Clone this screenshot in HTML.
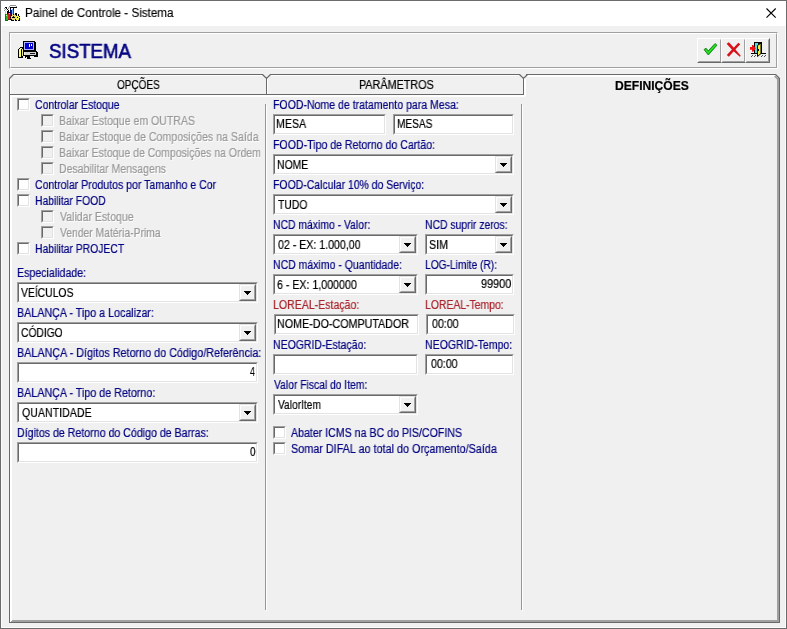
<!DOCTYPE html>
<html><head><meta charset="utf-8"><title>Painel de Controle - Sistema</title>
<style>
html,body{margin:0;padding:0}
body{width:787px;height:629px;overflow:hidden;background:#f0f0f0;position:relative;font-family:"Liberation Sans",sans-serif}
.a{position:absolute}
.t{will-change:transform;position:absolute;white-space:pre;transform-origin:0 0;font-family:"Liberation Sans",sans-serif}
.n{color:#000080;-webkit-text-stroke:0.2px #000080}.k{color:#000;-webkit-text-stroke:0.2px #000}.r{color:#a8242c;-webkit-text-stroke:0.2px #a8242c}
.d{color:#989898;-webkit-text-stroke:0.2px #989898;text-shadow:1px 1px 0 #fff}
.ti{color:#000;-webkit-text-stroke:0.15px #000}
.sis{-webkit-text-stroke:0.6px #000080}
.ed{position:absolute;box-sizing:border-box;background:#fff;border:1px solid;border-color:#a0a0a0 #fff #fff #a0a0a0}
.ed:before{content:"";position:absolute;left:0;top:0;right:0;bottom:0;border:1px solid;border-color:#696969 #e3e3e3 #e3e3e3 #696969}
.cb{position:absolute;box-sizing:border-box;width:13px;height:13px;background:#fff;border:1px solid;border-color:#a0a0a0 #fff #fff #a0a0a0}
.cb:before{content:"";position:absolute;left:0;top:0;right:0;bottom:0;border:1px solid;border-color:#696969 #e3e3e3 #e3e3e3 #696969}
.cb.dis{background:#f0f0f0}
.dd{position:absolute;box-sizing:border-box;width:17px;height:17px;background:#f0f0f0;border:1px solid;border-color:#e3e3e3 #696969 #696969 #e3e3e3}
.dd:before{content:"";position:absolute;left:0;top:0;right:0;bottom:0;border:1px solid;border-color:#fff #a0a0a0 #a0a0a0 #fff}
.dd i{position:absolute;left:4px;top:6px;width:7px;height:1px;background:#000}
.dd i:before{content:"";position:absolute;left:1px;top:1px;width:5px;height:1px;background:#000}
.dd i:after{content:"";position:absolute;left:3px;top:3px;width:1px;height:1px;background:#000;box-shadow:-1px -1px 0 #000,0 -1px 0 #000,1px -1px 0 #000}
.btn{position:absolute;box-sizing:border-box;background:#f0f0f0;border:1px solid;border-color:#fff #696969 #696969 #fff}
.btn:before{content:"";position:absolute;left:0;top:0;right:0;bottom:0;border:1px solid;border-color:#f0f0f0 #a0a0a0 #a0a0a0 #f0f0f0}
</style></head><body>

<div class="a" style="left:0;top:0;width:787px;height:629px;box-sizing:border-box;border:1px solid #6b6b6b"></div>
<div class="a" style="left:1px;top:1px;width:785px;height:25px;background:#fff"></div>
<div class="a" style="left:9px;top:32px;width:769px;height:37px;box-sizing:border-box;border:1px solid;border-color:#a0a0a0 #fff #fff #a0a0a0"></div>
<div class="a" style="left:10px;top:33px;width:767px;height:35px;box-sizing:border-box;border:1px solid;border-color:#fff #a0a0a0 #a0a0a0 #fff"></div>
<svg class="a" style="left:0;top:0" width="787" height="629" viewBox="0 0 787 629">
<g shape-rendering="crispEdges" fill="none" stroke-width="1">
<!-- window inner light line -->
<path d="M1.5 26 V628 M785.5 26 V628 M1 627.5 H786" stroke="#fbfbfb"/>
<!-- white highlights -->
<path d="M10.5 78 V95 M13 75.5 H262 M267.5 79 V94 M271 75.5 H519" stroke="#fff"/>
<path d="M527 75.5 H776 M527 76.5 H775 M524.5 78 V96 M525.5 79 V96" stroke="#fff"/>
<path d="M10 95.5 H526 M10 96.5 H525 M10.5 95 V622 M11.5 95 V621" stroke="#fff"/>
<!-- shadow -->
<path d="M777.5 79 V622 M778.5 78 V622 M12 620.5 H779 M11 621.5 H779" stroke="#a0a0a0"/>
<!-- dark -->
<path d="M9.5 78 V623 M9 622.5 H780 M779.5 78 V623 M13 74.5 H263 M270 74.5 H520 M526 74.5 H776 M266.5 78 V95 M523.5 78 V95 M9 94.5 H524" stroke="#696969"/>
<!-- separators -->
<path d="M265.5 104 V610 M521.5 104 V610" stroke="#969696"/>
<path d="M266.5 105 V611 M522.5 105 V611" stroke="#fff"/>
</g>
<g fill="none" stroke="#696969" stroke-width="1.2">
<path d="M9.5 78.5 L13.5 74.5 M262.5 74.5 L266.5 78.5 L270.5 74.5 M519.5 74.5 L523.5 78.5 L527.5 74.5 M775.5 74.5 L779.5 78.5"/>
</g>
<path d="M774.6 76 L778 79.4" stroke="#a0a0a0" stroke-width="1.6" fill="none"/>

</svg>
<div class="cb" style="left:17px;top:98px"></div>
<div class="cb dis" style="left:41px;top:114px"></div>
<div class="cb dis" style="left:41px;top:130px"></div>
<div class="cb dis" style="left:41px;top:146px"></div>
<div class="cb dis" style="left:41px;top:162px"></div>
<div class="cb" style="left:17px;top:178px"></div>
<div class="cb" style="left:17px;top:194px"></div>
<div class="cb dis" style="left:41px;top:210px"></div>
<div class="cb dis" style="left:41px;top:226px"></div>
<div class="cb" style="left:17px;top:242px"></div>
<div class="ed" style="left:17px;top:282px;width:241px;height:21px"></div>
<div class="dd" style="left:239px;top:284px"><i></i></div>
<div class="ed" style="left:17px;top:322px;width:241px;height:21px"></div>
<div class="dd" style="left:239px;top:324px"><i></i></div>
<div class="ed" style="left:17px;top:362px;width:241px;height:21px"></div>
<div class="ed" style="left:17px;top:402px;width:241px;height:21px"></div>
<div class="dd" style="left:239px;top:404px"><i></i></div>
<div class="ed" style="left:17px;top:442px;width:241px;height:21px"></div>
<div class="ed" style="left:273px;top:114px;width:113px;height:21px"></div>
<div class="ed" style="left:393px;top:114px;width:121px;height:21px"></div>
<div class="ed" style="left:273px;top:154px;width:241px;height:21px"></div>
<div class="dd" style="left:495px;top:156px"><i></i></div>
<div class="ed" style="left:273px;top:194px;width:241px;height:21px"></div>
<div class="dd" style="left:495px;top:196px"><i></i></div>
<div class="ed" style="left:273px;top:234px;width:145px;height:21px"></div>
<div class="dd" style="left:399px;top:236px"><i></i></div>
<div class="ed" style="left:425px;top:234px;width:89px;height:21px"></div>
<div class="dd" style="left:495px;top:236px"><i></i></div>
<div class="ed" style="left:273px;top:274px;width:145px;height:21px"></div>
<div class="dd" style="left:399px;top:276px"><i></i></div>
<div class="ed" style="left:425px;top:274px;width:89px;height:21px"></div>
<div class="ed" style="left:274px;top:314px;width:145px;height:21px"></div>
<div class="ed" style="left:426px;top:314px;width:89px;height:21px"></div>
<div class="ed" style="left:273px;top:354px;width:145px;height:21px"></div>
<div class="ed" style="left:425px;top:354px;width:89px;height:21px"></div>
<div class="ed" style="left:273px;top:394px;width:145px;height:21px"></div>
<div class="dd" style="left:399px;top:396px"><i></i></div>
<div class="cb" style="left:273px;top:426px"></div>
<div class="cb" style="left:273px;top:442px"></div>
<div class="btn" style="left:697px;top:38px;width:25px;height:25px"></div>
<div class="btn" style="left:721px;top:38px;width:25px;height:25px"></div>
<div class="btn" style="left:745px;top:38px;width:25px;height:25px"></div>
<svg class="a" style="left:0;top:0" width="787" height="629" viewBox="0 0 787 629">
<!-- close X -->
<path d="M766.5 8.5 L775.7 17.7 M775.7 8.5 L766.5 17.7" stroke="#000" stroke-width="1.1" fill="none"/>
<!-- title icon (tools) -->
<g shape-rendering="crispEdges">
<rect x="10" y="5" width="6" height="1" fill="#909090"/><rect x="9" y="6" width="1" height="1" fill="#909090"/><rect x="10" y="6" width="6" height="1" fill="#fff"/><rect x="16" y="6" width="1" height="1" fill="#909090"/><rect x="5" y="7" width="2" height="1" fill="#000"/><rect x="8" y="7" width="2" height="1" fill="#c8c8c8"/><rect x="10" y="7" width="7" height="1" fill="#000"/><rect x="4" y="8" width="1" height="1" fill="#909090"/><rect x="5" y="8" width="1" height="1" fill="#fff"/><rect x="6" y="8" width="1" height="1" fill="#000"/><rect x="7" y="8" width="1" height="1" fill="#fff"/><rect x="8" y="8" width="1" height="1" fill="#909090"/><rect x="10" y="8" width="1" height="1" fill="#000"/><rect x="11" y="8" width="1" height="1" fill="#fff"/><rect x="13" y="8" width="1" height="1" fill="#000070"/><rect x="4" y="9" width="1" height="1" fill="#fff"/><rect x="5" y="9" width="1" height="1" fill="#909090"/><rect x="6" y="9" width="1" height="1" fill="#fff"/><rect x="7" y="9" width="1" height="1" fill="#000"/><rect x="8" y="9" width="1" height="1" fill="#fff"/><rect x="10" y="9" width="1" height="1" fill="#000070"/><rect x="11" y="9" width="1" height="1" fill="#fff"/><rect x="12" y="9" width="1" height="1" fill="#70b0ff"/><rect x="13" y="9" width="1" height="1" fill="#000070"/><rect x="4" y="10" width="1" height="1" fill="#909090"/><rect x="5" y="10" width="1" height="1" fill="#fff"/><rect x="6" y="10" width="1" height="1" fill="#c8c8c8"/><rect x="7" y="10" width="1" height="1" fill="#fff"/><rect x="8" y="10" width="1" height="1" fill="#000"/><rect x="10" y="10" width="1" height="1" fill="#000070"/><rect x="11" y="10" width="1" height="1" fill="#480060"/><rect x="12" y="10" width="1" height="1" fill="#70b0ff"/><rect x="13" y="10" width="1" height="1" fill="#0048c0"/><rect x="5" y="11" width="1" height="1" fill="#c8c8c8"/><rect x="6" y="11" width="1" height="1" fill="#fff"/><rect x="7" y="11" width="2" height="1" fill="#000"/><rect x="10" y="11" width="1" height="1" fill="#000070"/><rect x="11" y="11" width="1" height="1" fill="#480060"/><rect x="12" y="11" width="1" height="1" fill="#70b0ff"/><rect x="13" y="11" width="1" height="1" fill="#0048c0"/><rect x="5" y="12" width="1" height="1" fill="#c8c8c8"/><rect x="6" y="12" width="1" height="1" fill="#fff"/><rect x="7" y="12" width="3" height="1" fill="#000"/><rect x="10" y="12" width="1" height="1" fill="#000070"/><rect x="11" y="12" width="1" height="1" fill="#480060"/><rect x="12" y="12" width="1" height="1" fill="#70b0ff"/><rect x="13" y="12" width="1" height="1" fill="#0048c0"/><rect x="5" y="13" width="1" height="1" fill="#c8c8c8"/><rect x="6" y="13" width="1" height="1" fill="#fff"/><rect x="7" y="13" width="1" height="1" fill="#000"/><rect x="8" y="13" width="1" height="1" fill="#d01818"/><rect x="9" y="13" width="1" height="1" fill="#ffb0b0"/><rect x="10" y="13" width="2" height="1" fill="#480060"/><rect x="12" y="13" width="1" height="1" fill="#70b0ff"/><rect x="13" y="13" width="1" height="1" fill="#0048c0"/><rect x="15" y="13" width="2" height="1" fill="#000"/><rect x="5" y="14" width="1" height="1" fill="#107010"/><rect x="6" y="14" width="1" height="1" fill="#28b428"/><rect x="7" y="14" width="1" height="1" fill="#107010"/><rect x="8" y="14" width="2" height="1" fill="#d01818"/><rect x="10" y="14" width="2" height="1" fill="#480060"/><rect x="12" y="14" width="1" height="1" fill="#e0d878"/><rect x="13" y="14" width="1" height="1" fill="#000"/><rect x="14" y="14" width="1" height="1" fill="#e0d878"/><rect x="15" y="14" width="2" height="1" fill="#000"/><rect x="18" y="14" width="1" height="1" fill="#000"/><rect x="5" y="15" width="1" height="1" fill="#107010"/><rect x="6" y="15" width="1" height="1" fill="#b0ffb0"/><rect x="7" y="15" width="1" height="1" fill="#28b428"/><rect x="8" y="15" width="2" height="1" fill="#d01818"/><rect x="10" y="15" width="1" height="1" fill="#801010"/><rect x="11" y="15" width="1" height="1" fill="#000"/><rect x="12" y="15" width="4" height="1" fill="#e0d878"/><rect x="16" y="15" width="1" height="1" fill="#000"/><rect x="17" y="15" width="1" height="1" fill="#f0f050"/><rect x="18" y="15" width="1" height="1" fill="#000"/><rect x="5" y="16" width="1" height="1" fill="#107010"/><rect x="6" y="16" width="2" height="1" fill="#28b428"/><rect x="8" y="16" width="2" height="1" fill="#d01818"/><rect x="10" y="16" width="1" height="1" fill="#801010"/><rect x="11" y="16" width="2" height="1" fill="#e0d878"/><rect x="13" y="16" width="1" height="1" fill="#000"/><rect x="14" y="16" width="2" height="1" fill="#e0d878"/><rect x="16" y="16" width="3" height="1" fill="#f0f050"/><rect x="19" y="16" width="1" height="1" fill="#000"/><rect x="5" y="17" width="1" height="1" fill="#107010"/><rect x="6" y="17" width="2" height="1" fill="#28b428"/><rect x="8" y="17" width="2" height="1" fill="#d01818"/><rect x="10" y="17" width="1" height="1" fill="#000"/><rect x="11" y="17" width="1" height="1" fill="#e0d878"/><rect x="12" y="17" width="3" height="1" fill="#000"/><rect x="15" y="17" width="1" height="1" fill="#e0d878"/><rect x="16" y="17" width="1" height="1" fill="#f0f050"/><rect x="17" y="17" width="1" height="1" fill="#000"/><rect x="18" y="17" width="2" height="1" fill="#f0f050"/><rect x="5" y="18" width="1" height="1" fill="#107010"/><rect x="6" y="18" width="2" height="1" fill="#28b428"/><rect x="8" y="18" width="2" height="1" fill="#d01818"/><rect x="10" y="18" width="1" height="1" fill="#801010"/><rect x="11" y="18" width="5" height="1" fill="#e0d878"/><rect x="16" y="18" width="3" height="1" fill="#f0f050"/><rect x="19" y="18" width="1" height="1" fill="#000"/><rect x="5" y="19" width="1" height="1" fill="#107010"/><rect x="6" y="19" width="2" height="1" fill="#28b428"/><rect x="8" y="19" width="2" height="1" fill="#801010"/><rect x="10" y="19" width="2" height="1" fill="#000"/><rect x="12" y="19" width="3" height="1" fill="#e0d878"/><rect x="15" y="19" width="1" height="1" fill="#000"/><rect x="16" y="19" width="3" height="1" fill="#f0f050"/><rect x="19" y="19" width="1" height="1" fill="#000"/><rect x="5" y="20" width="3" height="1" fill="#107010"/><rect x="11" y="20" width="3" height="1" fill="#000"/><rect x="15" y="20" width="2" height="1" fill="#000"/><rect x="18" y="20" width="2" height="1" fill="#000"/>
</g>
<!-- header computer icon -->
<g shape-rendering="crispEdges">
<rect x="23" y="41" width="12" height="10" fill="#000"/><rect x="35" y="42" width="1" height="9" fill="#000"/>
<rect x="24" y="42" width="10" height="8" fill="#b0b0ff"/>
<rect x="25" y="43" width="8" height="6" fill="#0000d0"/>
<rect x="29" y="44" width="1" height="3" fill="#fff"/><rect x="31" y="44" width="1" height="2" fill="#fff"/>
<rect x="23" y="51" width="14" height="5" fill="#000"/><rect x="37" y="52" width="1" height="5" fill="#000"/><rect x="34" y="56" width="3" height="1" fill="#000"/>
<rect x="24" y="52" width="12" height="3" fill="#d4d4d4"/><rect x="24" y="52" width="1" height="3" fill="#f4f4e0"/>
<rect x="30" y="53" width="5" height="1" fill="#181818"/>
<rect x="25" y="56" width="5" height="2" fill="#000"/><rect x="27" y="58" width="4" height="1" fill="#000"/><rect x="26" y="57" width="1" height="1" fill="#fff"/>
<rect x="18" y="49" width="5" height="9" fill="#000"/><rect x="19" y="48" width="4" height="1" fill="#000"/><rect x="20" y="47" width="3" height="1" fill="#000"/>
<rect x="19" y="50" width="2" height="7" fill="#ffff60"/><rect x="20" y="48" width="2" height="1" fill="#ffffa8"/><rect x="19" y="49" width="2" height="1" fill="#ffffa8"/><rect x="22" y="49" width="1" height="7" fill="#e8e898"/>
</g>
<!-- check -->
<path d="M704 49.6 L706 48.2 L708.3 50.8 L715 43.6 L717 45.2 L708.3 55 Z" fill="#14c814" stroke="#0a7a0a" stroke-width="0.8"/><path d="M705.6 49.9 L708.3 52.9 L715.8 44.7" stroke="#38f038" stroke-width="1" fill="none"/>
<!-- red X -->
<path d="M726.6 43.8 L728.9 42.3 L735 48.9 L740.7 55.7 L739.8 56.7 L733 50.8 Z" fill="#d81018"/>
<path d="M738.4 42.8 L740.2 44.2 L728.8 56.8 L726.8 55 Z" fill="#d81018"/>
<!-- door icon -->
<g shape-rendering="crispEdges">
<rect x="754" y="42" width="8" height="12" fill="#000"/>
<rect x="755" y="43" width="3" height="10" fill="#50d8e8"/>
<rect x="751" y="53" width="4" height="1" fill="#000"/><rect x="762" y="53" width="4" height="1" fill="#000"/>
</g>
<path d="M757.5 45.5 L761 43 L761 53.5 L757.5 56.5 Z" fill="#f8f040" stroke="#000" stroke-width="1"/>
<rect x="758" y="49" width="1" height="2" fill="#000"/>
<path d="M750 47.1 H752 V45.1 H753.3 L755.7 48.4 L753.3 51.7 H752 V49.8 H750 Z" fill="#f01010"/>
<g shape-rendering="crispEdges" fill="#505050"><rect x="751" y="56" width="1" height="1"/><rect x="752" y="55" width="1" height="1"/><rect x="754" y="56" width="1" height="1"/><rect x="755" y="55" width="1" height="1"/><rect x="761" y="56" width="1" height="1"/><rect x="762" y="55" width="1" height="1"/><rect x="764" y="56" width="1" height="1"/><rect x="765" y="55" width="1" height="1"/></g>
</svg>

<div class="t ti" style="left:24.73px;top:7px;font-size:12px;line-height:13px;transform:scaleX(0.9724)">Painel de Controle - Sistema</div>
<div class="t n sis" style="left:48.54px;top:41px;font-size:19.5px;line-height:20.5px;transform:scaleX(0.9588)">SISTEMA</div>
<div class="t k" style="left:117.00px;top:79px;font-size:12px;line-height:13px;transform:scaleX(0.8333)">OPÇÕES</div>
<div class="t k" style="left:358.60px;top:79px;font-size:12px;line-height:13px;transform:scaleX(0.9000)">PARÂMETROS</div>
<div class="t k" style="left:614.99px;top:80px;font-size:12px;line-height:13px;transform:scaleX(1.0069);font-weight:bold">DEFINIÇÕES</div>
<div class="t n" style="left:35.13px;top:99px;font-size:12px;line-height:13px;transform:scaleX(0.8737)">Controlar Estoque</div>
<div class="t d" style="left:59.12px;top:115px;font-size:12px;line-height:13px;transform:scaleX(0.8791)">Baixar Estoque em OUTRAS</div>
<div class="t d" style="left:59.11px;top:131px;font-size:12px;line-height:13px;transform:scaleX(0.8857)">Baixar Estoque de Composições na Saída</div>
<div class="t d" style="left:59.12px;top:147px;font-size:12px;line-height:13px;transform:scaleX(0.8751)">Baixar Estoque de Composições na Ordem</div>
<div class="t d" style="left:59.12px;top:163px;font-size:12px;line-height:13px;transform:scaleX(0.8760)">Desabilitar Mensagens</div>
<div class="t n" style="left:35.12px;top:179px;font-size:12px;line-height:13px;transform:scaleX(0.8762)">Controlar Produtos por Tamanho e Cor</div>
<div class="t n" style="left:35.14px;top:195px;font-size:12px;line-height:13px;transform:scaleX(0.8617)">Habilitar FOOD</div>
<div class="t d" style="left:59.50px;top:211px;font-size:12px;line-height:13px;transform:scaleX(0.8774)">Validar Estoque</div>
<div class="t d" style="left:59.50px;top:227px;font-size:12px;line-height:13px;transform:scaleX(0.8615)">Vender Matéria-Prima</div>
<div class="t n" style="left:35.14px;top:243px;font-size:12px;line-height:13px;transform:scaleX(0.8627)">Habilitar PROJECT</div>
<div class="t n" style="left:17.11px;top:267px;font-size:12px;line-height:13px;transform:scaleX(0.8855)">Especialidade:</div>
<div class="t k" style="left:21.00px;top:287px;font-size:12px;line-height:13px;transform:scaleX(0.8633)">VEÍCULOS</div>
<div class="t n" style="left:17.11px;top:307px;font-size:12px;line-height:13px;transform:scaleX(0.8921)">BALANÇA - Tipo a Localizar:</div>
<div class="t k" style="left:21.14px;top:327px;font-size:12px;line-height:13px;transform:scaleX(0.8553)">CÓDIGO</div>
<div class="t n" style="left:17.10px;top:347px;font-size:12px;line-height:13px;transform:scaleX(0.8978)">BALANÇA - Dígitos Retorno do Código/Referência:</div>
<div class="t k" style="left:250.00px;top:366px;font-size:12px;line-height:13px;transform:scaleX(0.7143)">4</div>
<div class="t n" style="left:17.11px;top:387px;font-size:12px;line-height:13px;transform:scaleX(0.8935)">BALANÇA - Tipo de Retorno:</div>
<div class="t k" style="left:22.00px;top:407px;font-size:12px;line-height:13px;transform:scaleX(0.8846)">QUANTIDADE</div>
<div class="t n" style="left:17.12px;top:427px;font-size:12px;line-height:13px;transform:scaleX(0.8847)">Dígitos de Retorno do Código de Barras:</div>
<div class="t k" style="left:250.00px;top:446px;font-size:12px;line-height:13px;transform:scaleX(0.8333)">0</div>
<div class="t n" style="left:273.12px;top:99px;font-size:12px;line-height:13px;transform:scaleX(0.8785)">FOOD-Nome de tratamento para Mesa:</div>
<div class="t k" style="left:276.11px;top:118px;font-size:12px;line-height:13px;transform:scaleX(0.8879)">MESA</div>
<div class="t k" style="left:396.66px;top:118px;font-size:12px;line-height:13px;transform:scaleX(0.8415)">MESAS</div>
<div class="t n" style="left:273.12px;top:139px;font-size:12px;line-height:13px;transform:scaleX(0.8819)">FOOD-Tipo de Retorno do Cartão:</div>
<div class="t k" style="left:277.13px;top:159px;font-size:12px;line-height:13px;transform:scaleX(0.8657)">NOME</div>
<div class="t n" style="left:273.13px;top:179px;font-size:12px;line-height:13px;transform:scaleX(0.8713)">FOOD-Calcular 10% do Serviço:</div>
<div class="t k" style="left:278.00px;top:199px;font-size:12px;line-height:13px;transform:scaleX(0.8618)">TUDO</div>
<div class="t n" style="left:273.14px;top:219px;font-size:12px;line-height:13px;transform:scaleX(0.8649)">NCD máximo - Valor:</div>
<div class="t n" style="left:425.13px;top:219px;font-size:12px;line-height:13px;transform:scaleX(0.8656)">NCD suprir zeros:</div>
<div class="t k" style="left:278.00px;top:239px;font-size:12px;line-height:13px;transform:scaleX(0.8839)">02 - EX: 1.000,00</div>
<div class="t k" style="left:429.41px;top:239px;font-size:12px;line-height:13px;transform:scaleX(0.8947)">SIM</div>
<div class="t n" style="left:273.13px;top:259px;font-size:12px;line-height:13px;transform:scaleX(0.8745)">NCD máximo - Quantidade:</div>
<div class="t n" style="left:425.15px;top:259px;font-size:12px;line-height:13px;transform:scaleX(0.8506)">LOG-Limite (R):</div>
<div class="t k" style="left:277.11px;top:279px;font-size:12px;line-height:13px;transform:scaleX(0.8854)">6 - EX: 1,000000</div>
<div class="t k" style="left:481.39px;top:278px;font-size:12px;line-height:13px;transform:scaleX(0.9062)">99900</div>
<div class="t r" style="left:273.12px;top:299px;font-size:12px;line-height:13px;transform:scaleX(0.8802)">LOREAL-Estação:</div>
<div class="t r" style="left:425.13px;top:299px;font-size:12px;line-height:13px;transform:scaleX(0.8674)">LOREAL-Tempo:</div>
<div class="t k" style="left:277.11px;top:318px;font-size:12px;line-height:13px;transform:scaleX(0.8938)">NOME-DO-COMPUTADOR</div>
<div class="t k" style="left:431.70px;top:318px;font-size:12px;line-height:13px;transform:scaleX(0.8867)">00:00</div>
<div class="t n" style="left:273.13px;top:339px;font-size:12px;line-height:13px;transform:scaleX(0.8743)">NEOGRID-Estação:</div>
<div class="t n" style="left:425.12px;top:339px;font-size:12px;line-height:13px;transform:scaleX(0.8773)">NEOGRID-Tempo:</div>
<div class="t k" style="left:430.70px;top:358px;font-size:12px;line-height:13px;transform:scaleX(0.8867)">00:00</div>
<div class="t n" style="left:274.00px;top:379px;font-size:12px;line-height:13px;transform:scaleX(0.8593)">Valor Fiscal do Item:</div>
<div class="t k" style="left:278.00px;top:399px;font-size:12px;line-height:13px;transform:scaleX(0.8500)">ValorItem</div>
<div class="t n" style="left:291.00px;top:427px;font-size:12px;line-height:13px;transform:scaleX(0.8839)">Abater ICMS na BC do PIS/COFINS</div>
<div class="t n" style="left:291.10px;top:443px;font-size:12px;line-height:13px;transform:scaleX(0.9013)">Somar DIFAL ao total do Orçamento/Saída</div>
</body></html>
